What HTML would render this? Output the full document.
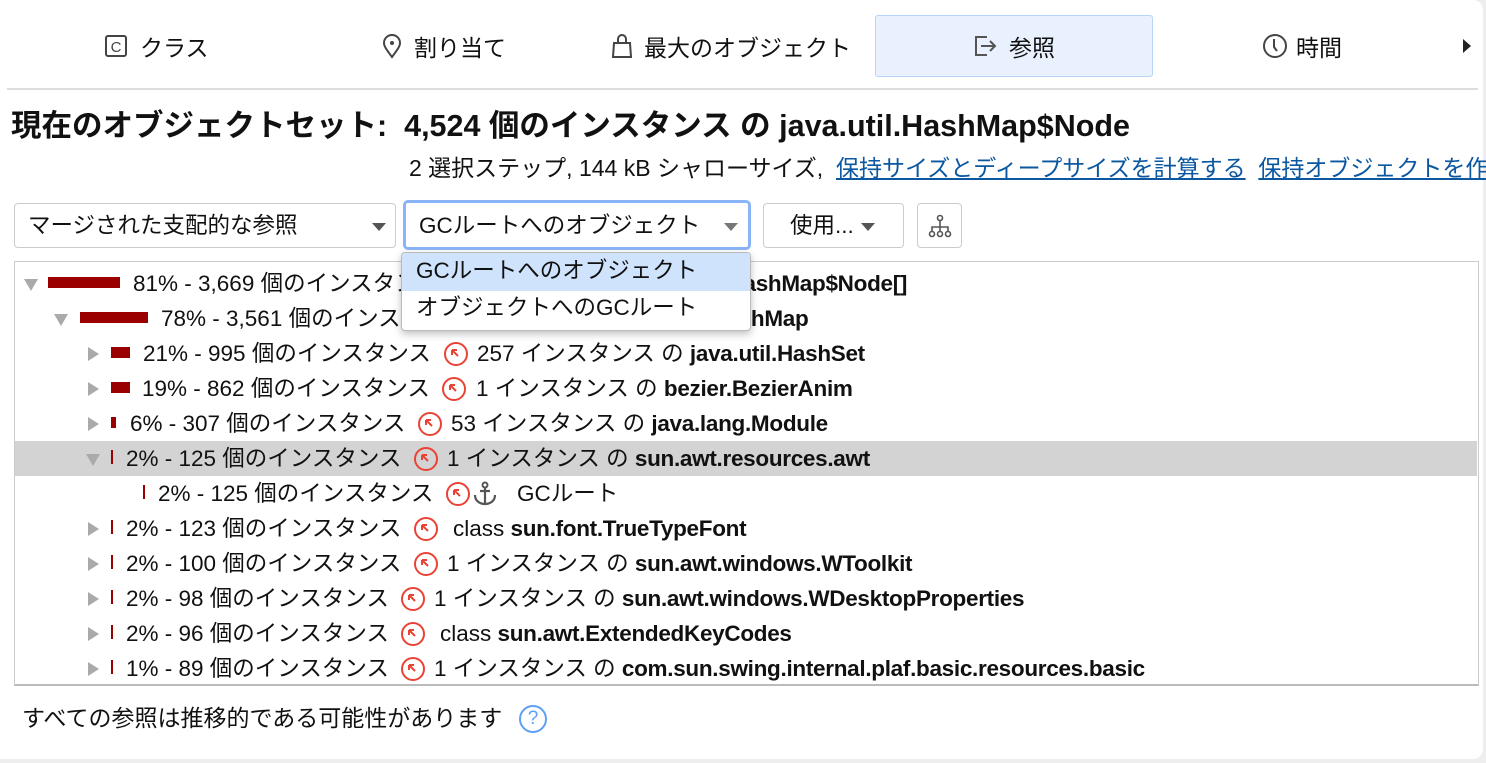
<!DOCTYPE html>
<html><head><meta charset="utf-8"><style>
*{box-sizing:border-box;margin:0;padding:0}
body{width:1486px;height:763px;background:#eeeeee;font-family:"Liberation Sans","Noto Sans CJK JP",sans-serif;color:#111;position:relative;overflow:hidden}
.card{position:absolute;left:0;top:0;width:1483px;height:759px;background:#fff;border-radius:0 10px 10px 0}
.a{position:absolute;white-space:nowrap}
.tab{position:absolute;top:15px;height:62px;font-size:23px;display:flex;align-items:center}
.row{position:absolute;left:15px;width:1462px;height:35px;font-size:22.5px}
.row .a{top:3px;line-height:30px}
.row b{letter-spacing:-0.3px}
.tri{position:absolute;width:0;height:0;border-top:7px solid transparent;border-bottom:7px solid transparent;border-left:11px solid #aaa;top:11px}
.trd{position:absolute;width:0;height:0;border-left:7px solid transparent;border-right:7px solid transparent;border-top:12px solid #aaa;top:13px}
.bar{position:absolute;background:#9b0000;top:11px;height:11px}
.ic{position:absolute;top:6px;width:24px;height:24px;border:2.5px solid #ea4335;border-radius:50%}
.ic svg{position:absolute;left:4px;top:4px}
b{font-weight:bold}
.sel{position:absolute;height:45px;border:1px solid #ccc;border-radius:4px;font-size:22.5px;background:#fff}
.sel .a{line-height:28px}
.caret{position:absolute;width:0;height:0;border-left:7px solid transparent;border-right:7px solid transparent;border-top:8px solid #555;top:19px}
</style></head><body><div class="card">

<!-- tabs -->
<div class="tab" style="left:104px"><svg width="24" height="24" viewBox="0 0 24 24"><rect x="2" y="2" width="20" height="20" rx="2" fill="none" stroke="#444" stroke-width="2"/><text x="12" y="18" text-anchor="middle" font-size="15" font-family="Liberation Sans" fill="#444">C</text></svg><span style="margin-left:12px">クラス</span></div>
<div class="tab" style="left:380px"><svg width="24" height="26" viewBox="0 0 24 26"><path d="M12 24C6 16 4 13 4 10a8 8 0 0 1 16 0c0 3-2 6-8 14z" fill="none" stroke="#444" stroke-width="2"/><circle cx="12" cy="10" r="2" fill="#444"/></svg><span style="margin-left:10px">割り当て</span></div>
<div class="tab" style="left:610px"><svg width="24" height="26" viewBox="0 0 24 26"><path d="M4 10h16l1 14H3z M8 10V6a4 4 0 0 1 8 0v4" fill="none" stroke="#444" stroke-width="2"/></svg><span style="margin-left:10px">最大のオブジェクト</span></div>
<div class="tab" style="left:875px;width:278px;background:#e8f1fd;border:1px solid #b8d4f8;border-radius:3px;justify-content:center"><svg width="26" height="24" viewBox="0 0 26 24"><path d="M14 3H3v18h11" fill="none" stroke="#555" stroke-width="2"/><path d="M8 12h14M17 7l5 5-5 5" fill="none" stroke="#555" stroke-width="2"/></svg><span style="margin-left:10px">参照</span></div>
<div class="tab" style="left:1262px"><svg width="26" height="26" viewBox="0 0 26 26"><circle cx="13" cy="13" r="11" fill="none" stroke="#444" stroke-width="2"/><path d="M12 6v8l3 4" fill="none" stroke="#444" stroke-width="2"/></svg><span style="margin-left:8px">時間</span></div>
<div class="a" style="left:1463px;top:39px;width:0;height:0;border-top:7px solid transparent;border-bottom:7px solid transparent;border-left:8px solid #222"></div>
<div class="a" style="left:7px;top:88px;width:1471px;height:2px;background:#ddd"></div>

<!-- title -->
<div class="a" style="left:11px;top:107px;font-size:30.5px;line-height:38px;font-weight:bold">現在のオブジェクトセット:&nbsp; 4,524 個のインスタンス の java.util.HashMap$Node</div>
<div class="a" style="left:409px;top:153px;font-size:23px;line-height:30px">2 選択ステップ, 144 kB シャローサイズ,&nbsp; <span style="color:#0b57a0;text-decoration:underline">保持サイズとディープサイズを計算する</span>&nbsp; <span style="color:#0b57a0;text-decoration:underline">保持オブジェクトを作成</span></div>

<!-- selects -->
<div class="sel" style="left:14px;top:203px;width:382px"><span class="a" style="left:13px;top:8px">マージされた支配的な参照</span><div class="caret" style="left:357px"></div></div>
<div class="sel" style="left:403px;top:200px;width:348px;height:50px;border:3px solid #8ab4f8;border-radius:5px"><span class="a" style="left:13px;top:9px">GCルートへのオブジェクト</span><div class="caret" style="left:318px;top:20px;border-top-color:#777"></div></div>
<div class="sel" style="left:763px;top:203px;width:141px"><span class="a" style="left:26px;top:8px">使用...</span><div class="caret" style="left:97px"></div></div>
<div class="sel" style="left:917px;top:203px;width:45px"><svg class="a" style="left:9px;top:10px" width="26" height="24" viewBox="0 0 26 24"><circle cx="13" cy="4" r="2.5" fill="none" stroke="#555" stroke-width="1.6"/><path d="M13 6.5v6M5 18v-5h16v5M13 13v5" fill="none" stroke="#555" stroke-width="1.6"/><circle cx="5" cy="20" r="2.5" fill="none" stroke="#555" stroke-width="1.6"/><circle cx="13" cy="20" r="2.5" fill="none" stroke="#555" stroke-width="1.6"/><circle cx="21" cy="20" r="2.5" fill="none" stroke="#555" stroke-width="1.6"/></svg></div>

<!-- tree -->
<div class="a" style="left:14px;top:261px;width:1465px;height:425px;border:1px solid #ccc;border-bottom:2px solid #bbb"></div>

<div class="row" style="top:266px"><div class="trd" style="left:9px"></div><div class="bar" style="left:33px;width:72px"></div><span class="a" style="left:118px">81% - 3,669 個のインスタンス ⓚ 1 インスタン の <b>java.util.HashMap$Node[]</b></span></div>
<div class="row" style="top:301px"><div class="trd" style="left:39px"></div><div class="bar" style="left:65px;width:68px"></div><span class="a" style="left:146px">78% - 3,561 個のインスタンス ⓚ 1 インス の <b>java.util.HashMap</b></span></div>

<div class="row" style="top:336px"><div class="tri" style="left:73px"></div><div class="bar" style="left:96px;width:19px"></div><span class="a" style="left:128px">21% - 995 個のインスタンス</span><div class="ic" style="left:429px"><svg width="11" height="11"><path d="M2 2h5M2 2v5M2 2l6 6" stroke="#ea4335" stroke-width="2" fill="none"/></svg></div><span class="a" style="left:462px">257 インスタンス の <b>java.util.HashSet</b></span></div>
<div class="row" style="top:371px"><div class="tri" style="left:73px"></div><div class="bar" style="left:96px;width:19px"></div><span class="a" style="left:127px">19% - 862 個のインスタンス</span><div class="ic" style="left:427px"><svg width="11" height="11"><path d="M2 2h5M2 2v5M2 2l6 6" stroke="#ea4335" stroke-width="2" fill="none"/></svg></div><span class="a" style="left:461px">1 インスタンス の <b>bezier.BezierAnim</b></span></div>
<div class="row" style="top:406px"><div class="tri" style="left:73px"></div><div class="bar" style="left:96px;width:5px"></div><span class="a" style="left:115px">6% - 307 個のインスタンス</span><div class="ic" style="left:403px"><svg width="11" height="11"><path d="M2 2h5M2 2v5M2 2l6 6" stroke="#ea4335" stroke-width="2" fill="none"/></svg></div><span class="a" style="left:436px">53 インスタンス の <b>java.lang.Module</b></span></div>
<div class="row" style="top:441px;background:#d3d3d3"><div class="trd" style="left:71px"></div><div class="bar" style="left:96px;width:2px;top:9px;height:14px"></div><span class="a" style="left:111px">2% - 125 個のインスタンス</span><div class="ic" style="left:399px"><svg width="11" height="11"><path d="M2 2h5M2 2v5M2 2l6 6" stroke="#ea4335" stroke-width="2" fill="none"/></svg></div><span class="a" style="left:432px">1 インスタンス の <b>sun.awt.resources.awt</b></span></div>
<div class="row" style="top:476px"><div class="bar" style="left:128px;width:2px;top:9px;height:14px"></div><span class="a" style="left:143px">2% - 125 個のインスタンス</span><div class="ic" style="left:431px"><svg width="11" height="11"><path d="M2 2h5M2 2v5M2 2l6 6" stroke="#ea4335" stroke-width="2" fill="none"/></svg></div><svg class="a" style="left:457px;top:5px" width="26" height="26" viewBox="0 0 26 26"><circle cx="13" cy="4" r="2.5" fill="none" stroke="#555" stroke-width="2"/><path d="M13 6.5V23M8 10h10M3 14c0 6 5 9 10 9s10-3 10-9" fill="none" stroke="#555" stroke-width="2.2"/></svg><span class="a" style="left:502px">GCルート</span></div>
<div class="row" style="top:511px"><div class="tri" style="left:73px"></div><div class="bar" style="left:96px;width:2px;top:9px;height:14px"></div><span class="a" style="left:111px">2% - 123 個のインスタンス</span><div class="ic" style="left:399px"><svg width="11" height="11"><path d="M2 2h5M2 2v5M2 2l6 6" stroke="#ea4335" stroke-width="2" fill="none"/></svg></div><span class="a" style="left:438px">class <b>sun.font.TrueTypeFont</b></span></div>
<div class="row" style="top:546px"><div class="tri" style="left:73px"></div><div class="bar" style="left:96px;width:2px;top:9px;height:14px"></div><span class="a" style="left:111px">2% - 100 個のインスタンス</span><div class="ic" style="left:399px"><svg width="11" height="11"><path d="M2 2h5M2 2v5M2 2l6 6" stroke="#ea4335" stroke-width="2" fill="none"/></svg></div><span class="a" style="left:432px">1 インスタンス の <b>sun.awt.windows.WToolkit</b></span></div>
<div class="row" style="top:581px"><div class="tri" style="left:73px"></div><div class="bar" style="left:96px;width:2px;top:9px;height:14px"></div><span class="a" style="left:111px">2% - 98 個のインスタンス</span><div class="ic" style="left:386px"><svg width="11" height="11"><path d="M2 2h5M2 2v5M2 2l6 6" stroke="#ea4335" stroke-width="2" fill="none"/></svg></div><span class="a" style="left:419px">1 インスタンス の <b>sun.awt.windows.WDesktopProperties</b></span></div>
<div class="row" style="top:616px"><div class="tri" style="left:73px"></div><div class="bar" style="left:96px;width:2px;top:9px;height:14px"></div><span class="a" style="left:111px">2% - 96 個のインスタンス</span><div class="ic" style="left:386px"><svg width="11" height="11"><path d="M2 2h5M2 2v5M2 2l6 6" stroke="#ea4335" stroke-width="2" fill="none"/></svg></div><span class="a" style="left:425px">class <b>sun.awt.ExtendedKeyCodes</b></span></div>
<div class="row" style="top:651px"><div class="tri" style="left:73px"></div><div class="bar" style="left:96px;width:2px;top:9px;height:14px"></div><span class="a" style="left:111px">1% - 89 個のインスタンス</span><div class="ic" style="left:386px"><svg width="11" height="11"><path d="M2 2h5M2 2v5M2 2l6 6" stroke="#ea4335" stroke-width="2" fill="none"/></svg></div><span class="a" style="left:419px">1 インスタンス の <b>com.sun.swing.internal.plaf.basic.resources.basic</b></span></div>

<!-- dropdown popup -->
<div class="a" style="left:401px;top:252px;width:350px;height:79px;background:#fff;border:1px solid #bbb;border-radius:4px;box-shadow:0 3px 8px rgba(0,0,0,.25);overflow:hidden;font-size:22.5px;line-height:28px">
<div style="height:38px;background:#cfe3fc;padding:4px 0 0 14px">GCルートへのオブジェクト</div>
<div style="height:38px;padding:3px 0 0 14px">オブジェクトへのGCルート</div>
</div>

<!-- footer -->
<div class="a" style="left:22px;top:703px;font-size:23px;line-height:30px">すべての参照は推移的である可能性があります</div>
<div class="a" style="left:519px;top:705px;width:28px;height:28px;border:2.5px solid #5ea0f5;border-radius:50%;color:#5ea0f5;font-size:19px;text-align:center;line-height:23px">?</div>
</div></body></html>
